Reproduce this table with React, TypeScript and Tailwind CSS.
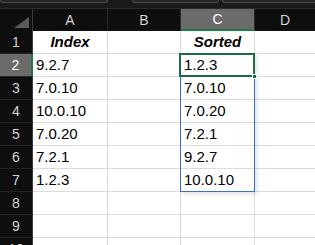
const font = "font-['Liberation_Sans',Arial,sans-serif]";

const rows: { a: string; c: string; bold?: boolean }[] = [
  { a: "Index", c: "Sorted", bold: true },
  { a: "9.2.7", c: "1.2.3" },
  { a: "7.0.10", c: "7.0.10" },
  { a: "10.0.10", c: "7.0.20" },
  { a: "7.0.20", c: "7.2.1" },
  { a: "7.2.1", c: "9.2.7" },
  { a: "1.2.3", c: "10.0.10" },
  { a: "", c: "" },
  { a: "", c: "" },
  { a: "", c: "" },
];

function ColHead({ label, w, active }: { label: string; w: string; active?: boolean }) {
  return (
    <div
      className={`${w} h-full flex items-center justify-center text-[14px] border-r border-[#2a2a2a] ${
        active ? "bg-[#6b6b6b] text-white border-b-2 border-b-[#1f7a45]" : "text-[#d4d4d4]"
      }`}
    >
      {label}
    </div>
  );
}

export default function App() {
  return (
    <div className={`w-[315px] h-[245px] overflow-hidden bg-white ${font}`}>
      {/* top strip: edges of the formula bar boxes */}
      <div className="h-[9px] bg-[#1b1b1b] flex border-b border-[#2c2c2c]">
        <div className="w-[108px] h-[3px] bg-[#262626] border border-t-0 border-[#4b4b4b] rounded-b-[3px]" />
        <div className="w-[24px]" />
        <div className="w-[87px] h-[3px] bg-[#262626] border border-t-0 border-[#4b4b4b] rounded-b-[3px]" />
        <div className="w-[3px]" />
        <div className="flex-1 h-[3px] bg-[#262626] border border-t-0 border-r-0 border-[#4b4b4b] rounded-bl-[3px]" />
      </div>

      {/* column headers */}
      <div className="h-[22px] flex bg-[#0e0e0e]">
        <div className="w-[33px] h-full border-r border-[#3a3a3a] flex items-end justify-end pr-[3px] pb-[3px]">
          <svg width="15" height="11" viewBox="0 0 15 11">
            <polygon points="0,11 15,11 15,0" fill="#5a5a5a" />
          </svg>
        </div>
        <ColHead label="A" w="w-[75px]" />
        <ColHead label="B" w="w-[73px]" />
        <ColHead label="C" w="w-[74px]" active />
        <div className="flex-1 h-full flex items-center justify-center text-[14px] text-[#d4d4d4]">D</div>
      </div>

      {/* grid body */}
      <div className="relative">
        {rows.map((r, i) => {
          const n = i + 1;
          const activeRow = n === 2;
          return (
            <div key={n} className="h-[23px] flex">
              <div
                className={`w-[33px] h-full flex items-center justify-center text-[14px] border-b border-[#242424] ${
                  activeRow
                    ? "bg-[#6b6b6b] text-white border-r-2 border-r-[#1f7a45]"
                    : "bg-[#0e0e0e] text-[#d4d4d4] border-r border-r-[#3a3a3a]"
                }`}
              >
                {n}
              </div>
              <div
                className={`w-[75px] h-full border-r border-b border-[#dcdcdc] flex items-end pb-[2px] text-[15px] text-black leading-[18px] ${
                  r.bold ? "justify-center font-bold italic" : "pl-[3px]"
                }`}
              >
                {r.a}
              </div>
              <div className="w-[73px] h-full border-r border-b border-[#dcdcdc]" />
              <div
                className={`w-[74px] h-full border-r border-b border-[#dcdcdc] flex items-end pb-[2px] text-[15px] text-black leading-[18px] ${
                  r.bold ? "justify-center font-bold italic" : "pl-[3px]"
                }`}
              >
                {r.c}
              </div>
              <div className="flex-1 h-full border-b border-[#dcdcdc]" />
            </div>
          );
        })}

        {/* selection range C2:C7 */}
        <div className="absolute left-[180px] top-[22px] w-[75px] h-[139px] border border-[#3a6fd0] shadow-[2px_2px_4px_rgba(0,0,0,0.12)] pointer-events-none" />
        {/* active cell C2 */}
        <div className="absolute left-[179px] top-[22px] w-[76px] h-[24px] border-2 border-[#1e6b41] pointer-events-none" />
        <div className="absolute left-[252px] top-[43px] w-[5px] h-[5px] bg-[#1e6b41] border border-white pointer-events-none" />
      </div>
    </div>
  );
}
